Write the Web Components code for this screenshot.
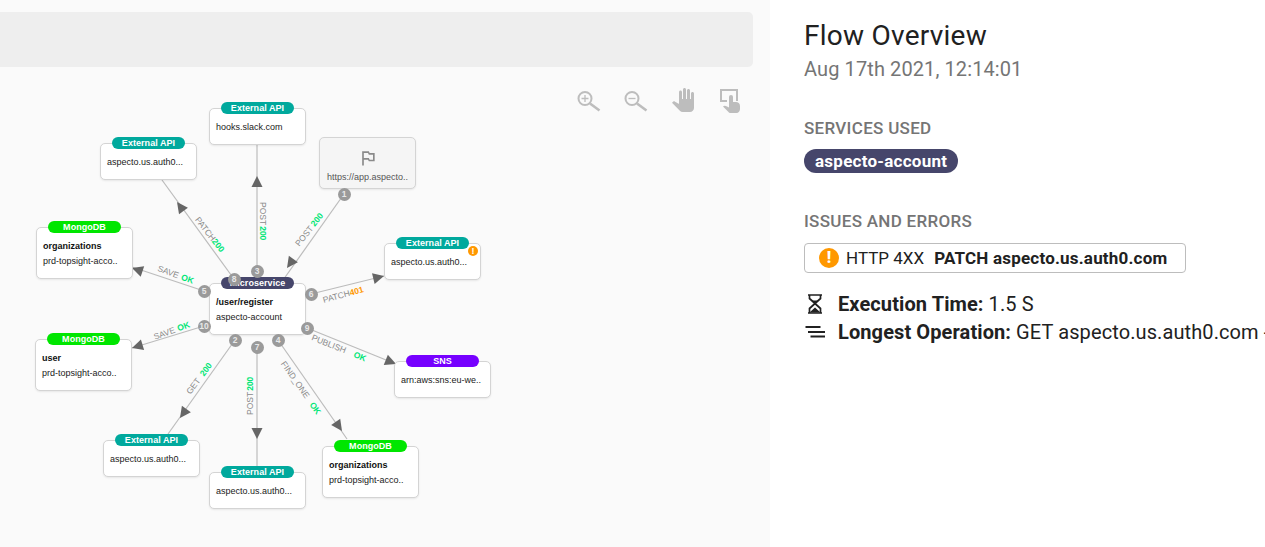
<!DOCTYPE html>
<html>
<head>
<meta charset="utf-8">
<title>Flow Overview</title>
<style>
html, body { margin: 0; height: 100%; overflow: hidden; background: #fff; }
body { font-family: Roboto, "Liberation Sans", sans-serif; }
</style>
</head>
<body>
<flow-page>
  <graph-panel slot="left">
    <tool-icon name="zoom-in"></tool-icon>
    <tool-icon name="zoom-out"></tool-icon>
    <tool-icon name="hand"></tool-icon>
    <tool-icon name="select"></tool-icon>

    <flow-canvas slot="canvas">
      <flow-edge from="257,271" to="257,145" tip="257,176" label="POST" status="200" at="263,202" angle="90" gap="1"></flow-edge>
      <flow-edge from="234,279" to="162,180" tip="177,202" label="PATCH" status="200" at="197,218" angle="52" gap="0"></flow-edge>
      <flow-edge from="204,291" to="132,267" tip="132,268" label="SAVE" status="OK" at="158,268" angle="20" gap="3"></flow-edge>
      <flow-edge from="344,194" to="281,283" tip="287,268" label="POST" status="200" at="297,245" angle="-52" gap="2"></flow-edge>
      <flow-edge from="311,294" to="384,276" tip="384,276" label="PATCH" status="401" tone="warn" at="323,300" angle="-15" gap="0"></flow-edge>
      <flow-edge from="307,328" to="396,364" tip="396,364" label="PUBLISH" status="OK" at="312,337" angle="22" gap="9"></flow-edge>
      <flow-edge from="278,340" to="347,439" tip="342,431" label="FIND_ONE" status="OK" at="283,362" angle="55" gap="7"></flow-edge>
      <flow-edge from="257,347" to="257,472" tip="257,439" label="POST" status="200" at="250,415" angle="-90" gap="1"></flow-edge>
      <flow-edge from="235,340" to="168,434" tip="180,418" label="GET" status="200" at="188,393" angle="-53" gap="5"></flow-edge>
      <flow-edge from="204,326" to="132,348" tip="132,348" label="SAVE" status="OK" at="154,337" angle="-20" gap="3"></flow-edge>

      <flow-node x="209" y="108" h="37" kind="External API" color="#00a99d" sub="hooks.slack.com"></flow-node>
      <flow-node x="100" y="143" h="37" kind="External API" color="#00a99d" sub="aspecto.us.auth0..."></flow-node>
      <flow-node x="36" y="227" h="52" kind="MongoDB" color="#00e600" name="organizations" sub="prd-topsight-acco.."></flow-node>
      <flow-node x="319" y="137" h="52" flag sub="https://app.aspecto.."></flow-node>
      <flow-node x="384" y="243" h="37" kind="External API" color="#00a99d" sub="aspecto.us.auth0..." warn></flow-node>
      <flow-node x="209" y="283" h="52" kind="Microservice" color="#46466b" name="/user/register" sub="aspecto-account"></flow-node>
      <flow-node x="35" y="339" h="52" kind="MongoDB" color="#00e600" name="user" sub="prd-topsight-acco.."></flow-node>
      <flow-node x="394" y="361" h="37" kind="SNS" color="#7600ff" sub="arn:aws:sns:eu-we.."></flow-node>
      <flow-node x="103" y="440" h="37" kind="External API" color="#00a99d" sub="aspecto.us.auth0..."></flow-node>
      <flow-node x="209" y="472" h="37" kind="External API" color="#00a99d" sub="aspecto.us.auth0..."></flow-node>
      <flow-node x="322" y="446" h="52" kind="MongoDB" color="#00e600" name="organizations" sub="prd-topsight-acco.."></flow-node>

      <flow-step x="344" y="194">1</flow-step>
      <flow-step x="235" y="340">2</flow-step>
      <flow-step x="257" y="271">3</flow-step>
      <flow-step x="278" y="340">4</flow-step>
      <flow-step x="204" y="291">5</flow-step>
      <flow-step x="311" y="294">6</flow-step>
      <flow-step x="257" y="347">7</flow-step>
      <flow-step x="234" y="279">8</flow-step>
      <flow-step x="307" y="328">9</flow-step>
      <flow-step x="204" y="326">10</flow-step>
    </flow-canvas>
  </graph-panel>

  <overview-panel slot="right" title="Flow Overview" date="Aug 17th 2021, 12:14:01">
    <section-label>SERVICES USED</section-label>
    <service-pill>aspecto-account</service-pill>
    <section-label class="issues">ISSUES AND ERRORS</section-label>
    <issue-chip code="HTTP 4XX">PATCH aspecto.us.auth0.com</issue-chip>
    <stat-row icon="hourglass" label="Execution Time:">1.5 S</stat-row>
    <stat-row icon="lines" label="Longest Operation:">GET aspecto.us.auth0.com -</stat-row>
  </overview-panel>
</flow-page>

<script>
'use strict';

const SVG_NS = 'http://www.w3.org/2000/svg';
const NODE_WIDTH = 97;
const ARROW_LENGTH = 11;
const ARROW_HALF = 5.5;

const TOOL_ICONS = {
    'zoom-in': `<g fill="none" stroke="#bdbdbd" stroke-width="2"><circle cx="8" cy="10.5" r="6.5"/><path d="M13 15.5l9.5 7" stroke-width="2.6"/><path d="M8 7v7M4.500 10.500h7" stroke-width="1.300"/></g>`,
    'zoom-out': `<g fill="none" stroke="#bdbdbd" stroke-width="2"><circle cx="8" cy="10.5" r="6.5"/><path d="M13 15.5l9.500 7" stroke-width="2.600"/><path d="M4.500 10.500h7" stroke-width="1.300"/></g>`,
    hand: `<path fill="#bdbdbd" d="M23 5.500V20c0 2.200-1.800 4-4 4h-7.300c-1.080 0-2.100-.43-2.850-1.190L1 14.830s1.260-1.230 1.300-1.250c.22-.19.49-.29.79-.29.22 0 .42.06.6.16.04.01 4.310 2.460 4.310 2.460V4c0-.83.67-1.500 1.500-1.500S11 3.170 11 4v7h1V1.500c0-.83.67-1.500 1.500-1.500S15 .67 15 1.500V11h1V2.500c0-.83.67-1.500 1.500-1.500s1.500.67 1.500 1.500V11h1V5.500c0-.83.67-1.500 1.500-1.500s1.500.67 1.500 1.500z"/>`,
    select: `<path fill="none" stroke="#bdbdbd" stroke-width="2" d="M9 13H3V2h16v11"/><path fill="#bdbdbd" d="M11 9a2 2 0 0 1 4 0v5h3c2 0 4 1.500 4 4v3c0 2-1.500 4-3.500 4h-6c-1 0-1.500-.4-2-1L5 18.500c1-1.200 2.500-1 4 0l2 1z"/>`,
};

const STAT_ICONS = {
    hourglass: `<path fill="none" stroke="#212121" stroke-width="1.700" d="M4 2h14M4 20h14M5.500 2v3.500L16.500 15.500V20M16.500 2v3.500L5.500 15.500V20"/><path fill="#212121" d="M8 7.500h6l-3 2.700zM5.500 19.500L11 14.500l5.500 5z"/>`,
    lines: `<path fill="none" stroke="#212121" stroke-width="1.800" d="M1.500 6h15M4 11h17M6.500 15.500h14.500"/>`,
};

class FlowPage extends HTMLElement {
    constructor() {
        super();
        this.attachShadow({ mode: 'open' }).innerHTML = `
<style>
:host { display: flex; width: 100%; height: 100vh; }
.left { flex: 0 0 770px; min-width: 0; }
.right { flex: 1 1 0; min-width: 0; overflow: hidden; }
</style>
<div class="left"><slot name="left"></slot></div>
<div class="right"><slot name="right"></slot></div>`;
    }
}

class GraphPanel extends HTMLElement {
    constructor() {
        super();
        this.attachShadow({ mode: 'open' }).innerHTML = `
<style>
:host { display: block; position: relative; height: 547px; box-sizing: border-box; background: #fafafa; padding: 12px 17px 0 0; }
.bar { height: 55px; background: #eeeeee; border-radius: 0 5px 5px 0; }
.tools { display: flex; justify-content: flex-end; gap: 23px; margin: 21px 11px 0 0; }
</style>
<div class="bar"></div>
<div class="tools"><slot></slot></div>
<slot name="canvas"></slot>`;
    }
}

class ToolIcon extends HTMLElement {
    constructor() {
        super();
        this.attachShadow({ mode: 'open' });
    }

    connectedCallback() {
        this.shadowRoot.innerHTML = `
<style>:host { display: block; width: 24px; height: 26px; } svg { display: block; }</style>
<svg width="24" height="26" viewBox="0 0 24 26">${TOOL_ICONS[this.getAttribute('name')]}</svg>`;
    }
}

class FlowCanvas extends HTMLElement {
    constructor() {
        super();
        this.attachShadow({ mode: 'open' }).innerHTML = `
<style>:host { display: block; position: absolute; left: 0; top: 0; width: 0; height: 0; }</style>
<slot></slot>`;
    }
}

const point = value => value.split(',').map(Number);

class FlowEdge extends HTMLElement {
    constructor() {
        super();
        this.attachShadow({ mode: 'open' });
    }

    connectedCallback() {
        const [x1, y1] = point(this.getAttribute('from'));
        const [x2, y2] = point(this.getAttribute('to'));
        const [tx, ty] = point(this.getAttribute('tip'));
        const [lx, ly] = point(this.getAttribute('at'));
        const angle = this.getAttribute('angle');
        const gap = this.getAttribute('gap') || 0;
        const tone = this.getAttribute('tone') === 'warn' ? '#ff9800' : '#00e676';

        const length = Math.hypot(x2 - x1, y2 - y1);
        const ux = (x2 - x1) / length;
        const uy = (y2 - y1) / length;
        const bx = tx - ux * ARROW_LENGTH;
        const by = ty - uy * ARROW_LENGTH;
        const arrow = [
            [tx, ty],
            [bx - uy * ARROW_HALF, by + ux * ARROW_HALF],
            [bx + uy * ARROW_HALF, by - ux * ARROW_HALF],
        ].map(p => p.join(',')).join(' ');

        this.shadowRoot.innerHTML = `
<style>
:host { display: block; position: absolute; left: 0; top: 0; width: 0; height: 0; }
svg { position: absolute; left: 0; top: 0; overflow: visible; }
text { font: 8.500px "Liberation Sans", Arial, sans-serif; fill: #8a8a8a; dominant-baseline: central; }
.status { font-weight: 700; fill: ${tone}; }
</style>
<svg width="1" height="1" xmlns="${SVG_NS}">
  <line x1="${x1}" y1="${y1}" x2="${x2}" y2="${y2}" stroke="#bcbcbc" stroke-width="1.200"/>
  <polygon points="${arrow}" fill="#666"/>
  <text transform="translate(${lx} ${ly}) rotate(${angle})">${this.getAttribute('label')}<tspan class="status" dx="${gap}">${this.getAttribute('status')}</tspan></text>
</svg>`;
    }
}

class FlowNode extends HTMLElement {
    constructor() {
        super();
        this.attachShadow({ mode: 'open' });
    }

    connectedCallback() {
        const attr = key => this.getAttribute(key);
        const flag = this.hasAttribute('flag');
        const pill = attr('kind')
            ? `<span class="pill" style="background:${attr('color')}">${attr('kind')}</span>`
            : '';
        const warn = this.hasAttribute('warn') ? `<span class="warn">!</span>` : '';
        const icon = flag
            ? `<svg class="flag" width="20" height="20" viewBox="0 0 24 24"><path fill="#8a8a8a" d="M14 6l-1-2H5v17h2v-7h5l1 2h7V6h-6zm4 8h-4l-1-2H7V6h5l1 2h5v6z"/></svg>`
            : '';
        const name = attr('name') ? `<b>${attr('name')}</b>` : '';

        this.shadowRoot.innerHTML = `
<style>
:host {
  display: flex; flex-direction: column; position: absolute; box-sizing: border-box;
  left: ${attr('x')}px; top: ${attr('y')}px; width: ${NODE_WIDTH}px; height: ${attr('h')}px;
  padding: 4px 0 0 6px; gap: 3px;
  background: ${flag ? '#f5f5f5' : '#fff'}; border: 1px solid #d4d4d4; border-radius: 5px;
  box-shadow: 0 1px 2px rgba(0,0,0,.08);
  font: 9px/12px "Liberation Sans", Arial, sans-serif; color: #212121; white-space: nowrap;
}
:host([flag]) { align-items: center; padding: 10px 0 0; gap: 3px; color: #555; }
.pill {
  position: absolute; left: 11px; top: -7px; width: 73px; height: 12px; border-radius: 6px;
  color: #fff; font-weight: 700; line-height: 13px; text-align: center; letter-spacing: .05px;
}
.warn {
  position: absolute; right: 2px; top: 2px; width: 10px; height: 10px; border-radius: 50%;
  background: #ff9800; color: #fff; font-size: 9px; font-weight: 700; line-height: 10px; text-align: center;
}
.flag { display: block; }
b { color: #111; margin-top: 8px; }
.sub { margin-top: ${name || flag ? 0 : 8}px; }
</style>
${pill}${warn}${icon}${name}<span class="sub">${attr('sub')}</span>`;
    }
}

class FlowStep extends HTMLElement {
    constructor() {
        super();
        this.attachShadow({ mode: 'open' }).innerHTML = `
<style>
:host {
  display: flex; align-items: center; justify-content: center; position: absolute;
  width: 13px; height: 13px; margin: -6.500px 0 0 -6.500px; border-radius: 50%;
  background: #9a9a9a; color: #e8e8e8; font: 700 8.500px/13px "Liberation Sans", Arial, sans-serif;
}
</style>
<slot></slot>`;
    }

    connectedCallback() {
        this.style.left = `${this.getAttribute('x')}px`;
        this.style.top = `${this.getAttribute('y')}px`;
    }
}

class OverviewPanel extends HTMLElement {
    constructor() {
        super();
        this.attachShadow({ mode: 'open' });
    }

    connectedCallback() {
        this.shadowRoot.innerHTML = `
<style>
:host { display: block; box-sizing: border-box; height: 547px; padding: 19px 0 0 34px; white-space: nowrap; color: #212121; font-family: Roboto, "Liberation Sans", sans-serif; }
h1 { margin: 0; font-size: 28px; font-weight: 400; line-height: 34px; letter-spacing: .25px; }
p { margin: 3px 0 36px; font-size: 20px; line-height: 26px; color: #757575; letter-spacing: .1px; }
</style>
<h1>${this.getAttribute('title')}</h1>
<p>${this.getAttribute('date')}</p>
<slot></slot>`;
    }
}

class SectionLabel extends HTMLElement {
    constructor() {
        super();
        this.attachShadow({ mode: 'open' }).innerHTML = `
<style>
:host { display: block; font-size: 17px; font-weight: 500; line-height: 20px; color: #757575; letter-spacing: .3px; }
:host(.issues) { margin-top: 38px; }
</style>
<slot></slot>`;
    }
}

class ServicePill extends HTMLElement {
    constructor() {
        super();
        this.attachShadow({ mode: 'open' }).innerHTML = `
<style>
:host { display: block; width: fit-content; margin-top: 11px; padding: 0 11px; height: 24px; border-radius: 12px; background: #46466b; color: #fff; font-size: 17px; font-weight: 700; line-height: 24px; letter-spacing: .25px; }
</style>
<slot></slot>`;
    }
}

class IssueChip extends HTMLElement {
    constructor() {
        super();
        this.attachShadow({ mode: 'open' });
    }

    connectedCallback() {
        this.shadowRoot.innerHTML = `
<style>
:host { display: flex; align-items: center; box-sizing: border-box; width: 382px; height: 30px; margin-top: 12px; padding-left: 14px; border: 1.5px solid #bdbdbd; border-radius: 4px; font-size: 17px; }
.dot { flex: none; width: 20px; height: 20px; margin-right: 7px; border-radius: 50%; background: #ff9800; color: #fff; font-size: 16px; font-weight: 900; line-height: 20px; text-align: center; }
b { margin-left: 10px; font-weight: 700; letter-spacing: .2px; }
</style>
<span class="dot">!</span><span>${this.getAttribute('code')}</span><b><slot></slot></b>`;
    }
}

class StatRow extends HTMLElement {
    constructor() {
        super();
        this.attachShadow({ mode: 'open' });
    }

    connectedCallback() {
        this.shadowRoot.innerHTML = `
<style>
:host { display: flex; align-items: center; height: 28px; font-size: 20px; letter-spacing: .1px; }
:host(:nth-of-type(1)) { margin-top: 17px; }
svg { flex: none; display: block; margin-right: 12px; }
b { font-weight: 700; margin-right: 5px; }
</style>
<svg width="22" height="22" viewBox="0 0 22 22">${STAT_ICONS[this.getAttribute('icon')]}</svg>
<b>${this.getAttribute('label')}</b><span><slot></slot></span>`;
    }
}

customElements.define('flow-page', FlowPage);
customElements.define('graph-panel', GraphPanel);
customElements.define('tool-icon', ToolIcon);
customElements.define('flow-canvas', FlowCanvas);
customElements.define('flow-edge', FlowEdge);
customElements.define('flow-node', FlowNode);
customElements.define('flow-step', FlowStep);
customElements.define('overview-panel', OverviewPanel);
customElements.define('section-label', SectionLabel);
customElements.define('service-pill', ServicePill);
customElements.define('issue-chip', IssueChip);
customElements.define('stat-row', StatRow);
</script>
</body>
</html>
